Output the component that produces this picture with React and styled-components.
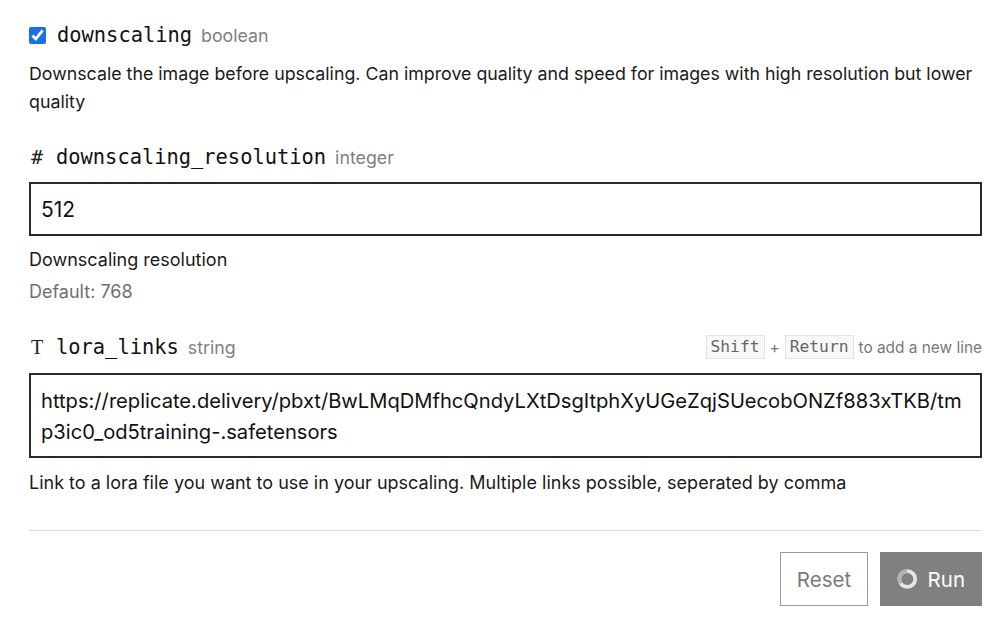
import React from "react";
import styled, { createGlobalStyle } from "styled-components";

const GlobalStyle = createGlobalStyle`
  html, body {
    margin: 0;
    padding: 0;
    background: #ffffff;
  }
  body {
    font-family: Inter, "Noto Sans", "Liberation Sans", sans-serif;
    color: #111111;
  }
`;

const Page = styled.div`
  padding: 21px 18px 0 29px;
  display: flex;
  flex-direction: column;
`;

const Field = styled.div`
  display: flex;
  flex-direction: column;
`;

const Header = styled.div`
  display: flex;
  align-items: center;
  justify-content: space-between;
  height: 28px;
  margin-top: ${(p) => p.$top || 0}px;
`;

const Title = styled.label`
  display: flex;
  align-items: baseline;
  gap: 9px;
`;

const Check = styled.input`
  width: 17px;
  height: 17px;
  margin: 0 2px 0 0;
  accent-color: #1a6fe3;
  align-self: center;
`;

const TypeIcon = styled.span`
  font-family: ${(p) => (p.$serif ? '"Liberation Serif"' : '"DejaVu Sans Mono"')}, monospace;
  font-size: 20px;
  color: #222;
  width: 16px;
  margin-left: 2px;
`;

const Name = styled.span`
  font-family: "DejaVu Sans Mono", monospace;
  font-size: 20.4px;
  font-weight: 500;
  color: #111;
`;

const Kind = styled.span`
  font-size: 17.8px;
  color: #808080;
`;

const Hint = styled.div`
  display: flex;
  align-items: center;
  gap: 5px;
  font-size: 15.4px;
  color: #777;
`;

const Kbd = styled.kbd`
  font-family: "DejaVu Sans Mono", monospace;
  font-size: 16.3px;
  color: #666;
  background: #f8f8f8;
  border: 1px solid #e2e2e2;
  padding: 1px 4px;
  line-height: 20px;
`;

const Help = styled.p`
  margin: ${(p) => p.$top || 0}px 0 0;
  font-size: ${(p) => p.$size || 18}px;
  line-height: 28px;
  color: ${(p) => (p.$muted ? "#6f6f6f" : "#1a1a1a")};
`;

const Input = styled.input`
  box-sizing: border-box;
  width: 100%;
  height: 54px;
  margin-top: 11px;
  border: 2px solid #2b2b2b;
  padding: 0 10px;
  font-family: Inter, "Liberation Sans", sans-serif;
  font-size: 21px;
  color: #111;
  outline: none;
`;

const Area = styled.textarea`
  box-sizing: border-box;
  width: 100%;
  height: 85px;
  margin-top: 12px;
  border: 2px solid #2b2b2b;
  padding: 10px 10px;
  font-family: Inter, "Liberation Sans", sans-serif;
  font-size: 20.15px;
  line-height: 31px;
  color: #111;
  resize: none;
  overflow: hidden;
  word-break: break-all;
  outline: none;
`;

const Divider = styled.hr`
  border: none;
  border-top: 1px solid #dcdcdc;
  margin: 33px 0 21px;
  width: 100%;
`;

const Actions = styled.div`
  display: flex;
  justify-content: flex-end;
  gap: 12px;
`;

const Button = styled.button`
  height: 54px;
  box-sizing: border-box;
  display: flex;
  align-items: center;
  justify-content: center;
  gap: 10px;
  padding: 0 16px;
  font-family: Inter, "Liberation Sans", sans-serif;
  font-size: 20.5px;
  border: 1px solid ${(p) => (p.$primary ? "#808080" : "#9a9a9a")};
  background: ${(p) => (p.$primary ? "#808080" : "#ffffff")};
  color: ${(p) => (p.$primary ? "#ffffff" : "#7a7a7a")};
  width: ${(p) => p.$w}px;
`;

const Spinner = () => (
  <svg width="22" height="22" viewBox="0 0 22 22">
    <circle cx="11" cy="11" r="8.5" fill="none" stroke="#e6e6e6" strokeWidth="4" />
    <path d="M11 2.5 A8.5 8.5 0 0 0 4 16" fill="none" stroke="#b3b3b3" strokeWidth="4" />
  </svg>
);

export default function App() {
  return (
    <>
      <GlobalStyle />
      <Page>
        <Field>
          <Header>
            <Title>
              <Check type="checkbox" defaultChecked />
              <Name>downscaling</Name>
              <Kind>boolean</Kind>
            </Title>
          </Header>
          <Help $top={11} $size={17.8}>
            Downscale the image before upscaling. Can improve quality and speed for images with high
            resolution but lower quality
          </Help>
        </Field>

        <Field>
          <Header $top={27}>
            <Title>
              <TypeIcon>#</TypeIcon>
              <Name>downscaling_resolution</Name>
              <Kind>integer</Kind>
            </Title>
          </Header>
          <Input defaultValue="512" />
          <Help $top={10}>Downscaling resolution</Help>
          <Help $top={4} $muted>
            Default: 768
          </Help>
        </Field>

        <Field>
          <Header $top={27}>
            <Title>
              <TypeIcon $serif>T</TypeIcon>
              <Name>lora_links</Name>
              <Kind>string</Kind>
            </Title>
            <Hint>
              <Kbd>Shift</Kbd>+<Kbd>Return</Kbd>
              <span>to add a new line</span>
            </Hint>
          </Header>
          <Area
            defaultValue="https://replicate.delivery/pbxt/BwLMqDMfhcQndyLXtDsgItphXyUGeZqjSUecobONZf883xTKB/tmp3ic0_od5training-.safetensors"
          />
          <Help $top={11}>
            Link to a lora file you want to use in your upscaling. Multiple links possible, seperated
            by comma
          </Help>
        </Field>

        <Divider />

        <Actions>
          <Button $w={88}>Reset</Button>
          <Button $primary $w={102}>
            <Spinner />
            Run
          </Button>
        </Actions>
      </Page>
    </>
  );
}
